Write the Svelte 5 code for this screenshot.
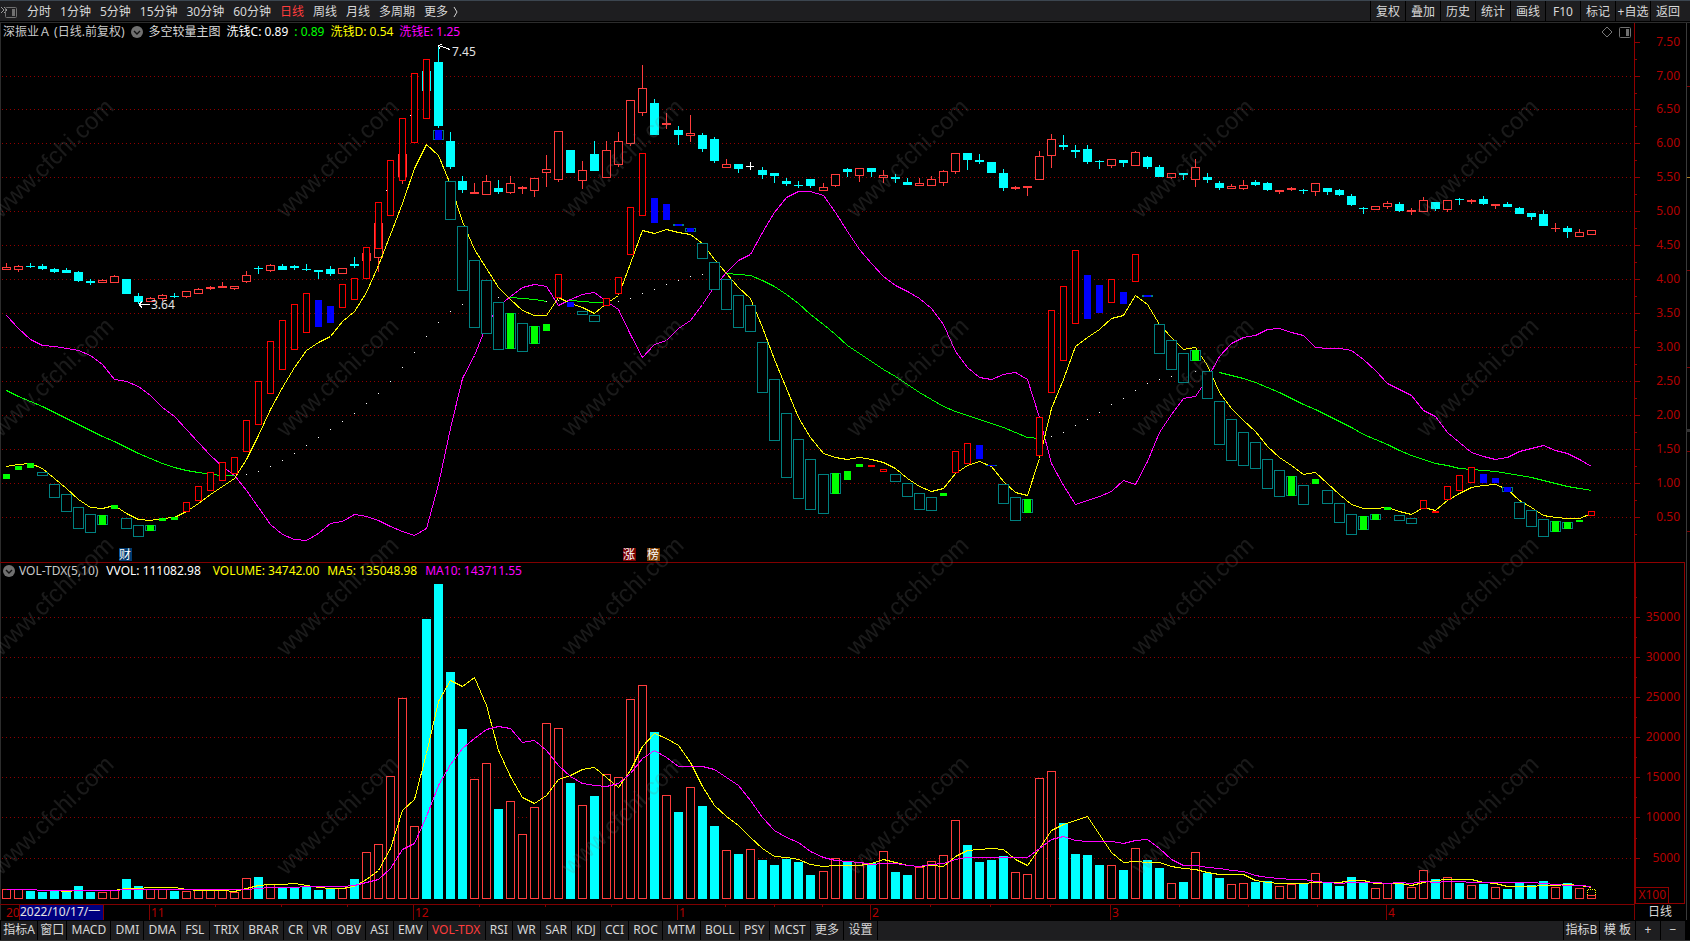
<script lang="ts">
	type Candle = [kind: string, high: number, top: number, bottom: number, low: number];
	type Bar = [kind: string, top: number, bottom: number];

	const periods = ['分时', '1分钟', '5分钟', '15分钟', '30分钟', '60分钟', '日线', '周线', '月线', '多周期', '更多'];
	const tools = ['复权', '叠加', '历史', '统计', '画线', 'F10', '标记', '+自选', '返回'];
	const indicators = [
		'指标A', '窗口', 'MACD', 'DMI', 'DMA', 'FSL', 'TRIX', 'BRAR', 'CR', 'VR', 'OBV', 'ASI', 'EMV', 'VOL-TDX',
		'RSI', 'WR', 'SAR', 'KDJ', 'CCI', 'ROC', 'MTM', 'BOLL', 'PSY', 'MCST', '更多', '设置'
	];
	const templates = ['指标B', '模 板', '+', '−'];

	let period = $state('日线');
	let indicator = $state('VOL-TDX');

	// Vertical positions are window rows; each panel shifts them up by its own top
	const PRICE_TOP = 23;
	const VOLUME_TOP = 562;
	const DATE_TOP = 904;
	const BASE = 899;

	// One bar every 12px, with a single column skipped after the 68th
	const col = (i: number) => 6 + 12 * i + (i >= 68 ? 1 : 0);

	const priceTicks = [
		['7.50', 42], ['7.00', 76], ['6.50', 109], ['6.00', 143], ['5.50', 177],
		['5.00', 211], ['4.50', 245], ['4.00', 279], ['3.50', 313], ['3.00', 347],
		['2.50', 381], ['2.00', 415], ['1.50', 449], ['1.00', 483], ['0.50', 517]
	] as [string, number][];

	const volumeTicks = [
		['35000', 617], ['30000', 657], ['25000', 697], ['20000', 737],
		['15000', 777], ['10000', 817], ['5000', 858]
	] as [string, number][];

	// r: rising (hollow), c: falling (solid), w: unchanged
	const candles: Candle[] = [
		['r', 263, 267, 270, 270], ['r', 265, 266, 270, 272], ['c', 263, 266, 267, 268], ['c', 264, 266, 269, 270],
		['c', 268, 269, 272, 273], ['c', 268, 270, 273, 273], ['c', 271, 272, 281, 282], ['c', 279, 281, 283, 285],
		['r', 279, 280, 283, 283], ['r', 275, 276, 283, 283], ['c', 279, 279, 294, 294], ['c', 293, 296, 302, 304],
		['r', 297, 298, 302, 302], ['r', 294, 295, 299, 301], ['c', 293, 296, 297, 298], ['r', 291, 291, 297, 298],
		['r', 288, 289, 294, 294], ['r', 286, 287, 289, 290], ['r', 282, 286, 288, 288], ['r', 286, 286, 289, 290],
		['r', 271, 275, 282, 283], ['c', 266, 268, 269, 274], ['r', 264, 265, 271, 272], ['c', 264, 266, 270, 270],
		['c', 265, 266, 268, 270], ['c', 264, 269, 270, 271], ['c', 270, 270, 272, 279], ['c', 266, 269, 274, 276],
		['r', 268, 268, 274, 274], ['c', 257, 264, 266, 268], ['r', 253, 253, 261, 261], ['r', 223, 223, 258, 272],
		['w', 190, 190, 191, 191], ['r', 154, 154, 177, 184], ['w', 115, 115, 116, 116], ['c', 71, 71, 91, 91],
		['c', 46, 62, 126, 128], ['c', 132, 141, 167, 169], ['c', 176, 181, 190, 193], ['r', 183, 192, 194, 194],
		['r', 175, 181, 195, 195], ['c', 180, 188, 192, 194], ['r', 176, 183, 193, 194], ['r', 186, 187, 189, 194],
		['r', 178, 178, 191, 197], ['r', 155, 169, 173, 187], ['r', 131, 131, 180, 182], ['c', 150, 150, 173, 173],
		['r', 161, 170, 181, 189], ['c', 141, 154, 171, 171], ['r', 141, 150, 178, 178], ['r', 132, 141, 165, 167],
		['r', 100, 100, 144, 146], ['r', 65, 88, 113, 116], ['c', 99, 103, 135, 135], ['r', 113, 123, 125, 129],
		['c', 126, 130, 135, 145], ['r', 115, 133, 136, 142], ['c', 133, 135, 149, 152], ['c', 137, 139, 161, 163],
		['r', 159, 164, 168, 168], ['c', 164, 164, 169, 173], ['w', 162, 166, 167, 170], ['c', 167, 170, 175, 179],
		['c', 173, 173, 176, 183], ['c', 178, 181, 184, 186], ['c', 181, 185, 186, 188], ['c', 179, 179, 186, 188],
		['r', 183, 187, 191, 191], ['r', 174, 174, 186, 187], ['c', 168, 169, 172, 177], ['r', 168, 168, 176, 182],
		['c', 168, 168, 172, 177], ['r', 170, 175, 178, 183], ['c', 174, 177, 179, 183], ['c', 178, 182, 185, 185],
		['r', 178, 183, 186, 186], ['r', 176, 179, 186, 186], ['r', 170, 171, 183, 186], ['r', 153, 153, 172, 174],
		['c', 153, 153, 160, 170], ['c', 154, 160, 162, 164], ['c', 162, 162, 173, 173], ['c', 169, 173, 188, 191],
		['r', 186, 187, 189, 190], ['r', 186, 186, 188, 196], ['r', 151, 156, 180, 180], ['r', 134, 139, 156, 168],
		['c', 135, 145, 147, 150], ['c', 145, 150, 152, 158], ['c', 145, 149, 162, 164], ['c', 160, 161, 162, 169],
		['r', 159, 159, 166, 168], ['c', 160, 160, 163, 167], ['r', 151, 152, 166, 166], ['c', 156, 157, 167, 169],
		['c', 165, 167, 177, 177], ['r', 173, 173, 178, 179], ['c', 173, 173, 175, 180], ['r', 159, 167, 180, 187],
		['c', 173, 177, 180, 183], ['c', 181, 183, 188, 190], ['r', 184, 186, 189, 189], ['r', 180, 185, 189, 190],
		['c', 180, 182, 185, 186], ['c', 182, 183, 190, 191], ['r', 190, 190, 192, 194], ['r', 187, 188, 190, 191],
		['c', 189, 190, 191, 194], ['r', 183, 183, 192, 196], ['c', 188, 188, 192, 195], ['c', 189, 190, 195, 196],
		['c', 194, 196, 205, 206], ['c', 207, 208, 209, 214], ['r', 206, 206, 210, 210], ['r', 201, 203, 207, 209],
		['c', 202, 204, 211, 212], ['r', 208, 210, 212, 215], ['r', 197, 200, 212, 212], ['c', 202, 202, 209, 211],
		['r', 200, 200, 210, 212], ['c', 198, 199, 200, 205], ['r', 199, 200, 202, 204], ['c', 196, 199, 204, 205],
		['r', 204, 204, 206, 209], ['c', 202, 204, 207, 207], ['c', 207, 208, 214, 214], ['c', 213, 213, 217, 220],
		['c', 210, 214, 226, 226], ['r', 223, 228, 229, 232], ['c', 226, 228, 232, 238], ['r', 229, 232, 237, 237],
		['r', 230, 230, 235, 235]
	];

	// t: teal frame, g: green, b: blue, R: red frame; tg and tb are a fill inside the teal frame
	const bars: Bar[] = [
		['g', 474, 479], ['g', 466, 470], ['g', 463, 468], ['t', 472, 476], ['t', 484, 498], ['t', 494, 512],
		['t', 507, 529], ['t', 514, 533], ['tg', 515, 525], ['g', 505, 509], ['t', 518, 529], ['t', 525, 537],
		['tg', 525, 531], ['g', 518, 521], ['g', 517, 520], ['R', 502, 512], ['R', 486, 501], ['R', 472, 491],
		['R', 462, 481], ['R', 457, 474], ['R', 420, 452], ['R', 381, 425], ['R', 341, 394], ['R', 320, 370],
		['R', 304, 350], ['R', 293, 333], ['b', 300, 327], ['b', 306, 323], ['R', 284, 308], ['R', 278, 300],
		['R', 247, 279], ['R', 202, 249], ['R', 160, 216], ['R', 118, 181], ['R', 73, 143], ['R', 59, 119],
		['tb', 130, 140], ['t', 181, 220], ['t', 226, 291], ['t', 260, 328], ['t', 280, 334], ['t', 302, 350],
		['tg', 313, 349], ['t', 323, 352], ['tg', 326, 344], ['g', 324, 331], ['R', 274, 298], ['b', 302, 307],
		['t', 311, 315], ['t', 315, 322], ['R', 298, 306], ['R', 277, 294], ['R', 207, 255], ['R', 153, 216],
		['b', 198, 223], ['b', 204, 220], ['tb', 224, 226], ['tb', 228, 232], ['t', 243, 259], ['t', 262, 290],
		['t', 279, 310], ['t', 295, 328], ['t', 305, 332], ['t', 342, 393], ['t', 379, 441], ['t', 413, 478],
		['t', 439, 499], ['t', 459, 510], ['t', 474, 514], ['tg', 473, 494], ['g', 471, 480], ['g', 464, 467],
		['R', 465, 467], ['R', 469, 472], ['t', 474, 482], ['t', 483, 497], ['t', 493, 510], ['t', 497, 511],
		['g', 493, 496], ['R', 451, 473], ['R', 443, 464], ['b', 445, 459], ['tb', 465, 466], ['t', 484, 504],
		['t', 497, 521], ['tg', 499, 513], ['R', 417, 456], ['R', 310, 393], ['R', 286, 361], ['R', 250, 324],
		['b', 275, 319], ['b', 285, 313], ['R', 279, 303], ['b', 292, 304], ['R', 254, 282], ['tb', 295, 297],
		['t', 324, 354], ['t', 340, 370], ['t', 353, 383], ['tg', 350, 361], ['t', 371, 399], ['t', 401, 445],
		['t', 419, 461], ['t', 432, 466], ['t', 442, 469], ['t', 459, 489], ['t', 470, 497], ['tg', 476, 496],
		['t', 485, 505], ['g', 479, 484], ['t', 490, 504], ['t', 503, 523], ['t', 514, 535], ['tg', 516, 530],
		['tg', 514, 520], ['g', 507, 510], ['t', 515, 521], ['t', 518, 524], ['R', 500, 509], ['R', 511, 513],
		['R', 486, 500], ['R', 475, 491], ['R', 467, 483], ['b', 474, 483], ['b', 478, 483], ['tb', 487, 492],
		['t', 502, 519], ['t', 510, 527], ['t', 519, 537], ['tg', 521, 532], ['tg', 522, 529], ['g', 520, 522],
		['R', 511, 516]
	];

	const lineD = [
		466, 464, 463, 468, 478, 488, 499, 507, 508, 505, 513, 519, 520, 518, 517, 511, 503, 494, 486, 478, 459, 435,
		409, 387, 367, 350, 342, 336, 321, 311, 292, 265, 234, 203, 168, 144, 155, 184, 221, 249, 268, 287, 299, 310,
		315, 315, 297, 303, 307, 313, 303, 295, 263, 230, 233, 229, 232, 234, 243, 259, 273, 287, 298, 327, 359, 388,
		417, 437, 453, 457, 459, 457, 459, 462, 468, 478, 486, 491, 488, 473, 465, 461, 466, 481, 492, 495, 458, 408,
		379, 346, 337, 329, 318, 315, 295, 304, 324, 337, 349, 347, 365, 392, 408, 420, 431, 446, 457, 465, 474, 472,
		483, 494, 504, 508, 508, 507, 511, 514, 507, 510, 500, 493, 487, 485, 484, 489, 500, 507, 515, 517, 518, 518,
		513
	];

	const lineE = [
		315, 328, 339, 345, 346, 348, 350, 355, 364, 379, 381, 386, 395, 407, 416, 429, 442, 455, 466, 475, 490, 507,
		524, 534, 539, 540, 533, 523, 521, 514, 516, 520, 526, 531, 535, 528, 484, 428, 378, 355, 325, 306, 296, 287,
		284, 286, 305, 299, 294, 292, 301, 309, 334, 357, 344, 340, 328, 320, 304, 286, 272, 260, 254, 232, 212, 197,
		191, 191, 195, 212, 231, 249, 263, 276, 285, 291, 298, 308, 324, 351, 367, 377, 379, 374, 372, 379, 417, 463,
		485, 504, 500, 496, 491, 480, 484, 461, 432, 414, 398, 396, 378, 356, 343, 337, 335, 329, 328, 332, 335, 347,
		348, 348, 350, 359, 370, 383, 389, 395, 410, 416, 432, 442, 452, 456, 459, 457, 451, 448, 445, 450, 453, 459,
		466
	];

	// The green line breaks wherever the dotted one takes over
	const greenRuns: [number, number[]][] = [
		[0, [390, 396, 401, 406, 412, 418, 424, 430, 436, 441, 447, 453, 458, 463, 467, 470, 472, 474, 475, 475]],
		[42, [297, 298, 299, 301]],
		[47, [300, 301, 302, 302]],
		[60, [
			273, 274, 275, 280, 286, 294, 303, 314, 324, 334, 345, 353, 361, 369, 376, 384, 392, 399, 406, 411, 415,
			419, 423, 427, 432, 437, 438
		]],
		[101, [
			372, 375, 378, 382, 387, 392, 398, 404, 409, 415, 421, 427, 434, 439, 444, 450, 455, 459, 463, 465, 468,
			469, 470, 471, 473, 475, 477, 480, 483, 486, 488, 490
		]]
	];

	const dotRuns: [number, number[]][] = [
		[20, [474, 471, 466, 460, 453, 445, 437, 429, 421, 413, 403, 393, 381, 367, 352, 336, 322, 311, 304]],
		[41, [297]],
		[45, [301, 300]],
		[51, [301, 298, 293, 289, 284, 280, 276, 274]],
		[87, [436, 432, 425, 419, 412, 404, 398, 390, 383, 379, 376]],
		[99, [371]]
	];

	const volumeKinds =
		'rrccccccrrccrrcrrrrrrcrccccc' + 'rcrrrrrccccrrcrrrrrcrcrrrrcrcrccrcrcccccrrcrcrccrrrrccccrrrrccccrcrccrcrccrrccrrcrccccrrcrrcrcrcrcccc' + 'rcrr';

	const volumeTops = [
		889, 889, 891, 892, 891, 891, 886, 892, 892, 890, 879, 886, 889, 889, 891, 891, 890, 890, 890, 892, 878, 877,
		884, 888, 888, 886, 890, 888, 888, 879, 852, 844, 776, 698, 826, 619, 584, 672, 729, 779, 763, 809, 801, 834,
		807, 723, 728, 783, 805, 796, 774, 777, 699, 685, 732, 795, 812, 787, 806, 826, 850, 854, 849, 860, 865, 859,
		862, 875, 871, 858, 861, 862, 863, 851, 872, 875, 867, 861, 855, 820, 845, 862, 860, 856, 872, 874, 778, 771,
		823, 854, 855, 865, 865, 870, 848, 860, 868, 883, 882, 852, 873, 878, 884, 883, 882, 881, 886, 884, 884, 873,
		882, 886, 877, 883, 888, 883, 883, 887, 870, 879, 877, 883, 885, 884, 887, 889, 883, 885, 881, 887, 883, 888,
		895
	];

	function average(span: number) {
		return volumeTops.map((_, i) => {
			let sum = 0;
			for (let k = i - span + 1; k <= i; k++) sum += k < 0 ? 889 : volumeTops[k];
			return Math.round(sum / span);
		});
	}

	const ma5 = average(5);
	const ma10 = average(10);

	const points = (ys: number[], start = 0) => ys.map((y, k) => `${col(start + k) + 0.5},${y + 0.5}`).join(' ');

	const majorDates = [[149, '11'], [413, '12'], [677, '1'], [870, '2'], [1110, '3'], [1386, '4']] as [number, string][];
	const minorDates = [215, 281, 347, 479, 545, 611, 725, 774, 822, 930, 990, 1050, 1179, 1248, 1317];

	const edgeMarks = [[86, 1], [270, 1], [367, 1], [429, 1], [451, 1], [531, 1]];
</script>

{#snippet chevron()}
	<svg width="12" height="12" aria-hidden="true">
		<circle cx="6" cy="6" r="6" fill="#707070" />
		<path d="M3 5 L6 8 L9 5" fill="none" stroke="#111" stroke-width="1.4" />
	</svg>
{/snippet}

<div class="terminal">
	<header class="toolbar">
		<button class="dock" aria-label="侧栏">
			<svg width="18" height="13" aria-hidden="true">
				<path d="M1 1 L4 4 L1 7 M4 1 L7 4 L4 7" fill="none" stroke="#999" />
				<rect x="5.5" y="1.5" width="11" height="10" rx="1" fill="none" stroke="#707070" />
				<rect x="12" y="3" width="3" height="7" fill="#707070" />
			</svg>
		</button>
		<nav class="periods">
			{#each periods as name}
				<button class:active={period === name} onclick={() => (period = name)}>{name}</button>
			{/each}
			<svg class="more" width="6" height="12" aria-hidden="true">
				<path d="M1 1 L4 6 L1 11" fill="none" stroke="#d0d0d0" />
			</svg>
		</nav>
		<div class="tools">
			{#each tools as name}
				<button>{name}</button>
			{/each}
		</div>
	</header>

	<div class="body">
		<main>
			<section class="panel price">
				<div class="legend">
					<span class="stock">深振业Ａ (日线.前复权)</span>
					<button class="fold" aria-label="主图指标">{@render chevron()}</button>
					<span>多空较量主图</span>
					<span class="white">洗钱C: 0.89</span>
					<span class="green">: 0.89</span>
					<span class="yellow">洗钱D: 0.54</span>
					<span class="magenta">洗钱E: 1.25</span>
				</div>
				<div class="corner">
					<svg width="31" height="13" aria-hidden="true">
						<path d="M6 1 L11 6 L6 11 L1 6 Z" fill="none" stroke="#777" />
						<rect x="18.5" y="1.5" width="11" height="10" rx="1" fill="none" stroke="#707070" />
						<rect x="25" y="3" width="3" height="7" fill="#707070" />
					</svg>
				</div>
				<svg class="plot" width="100%" height="539" shape-rendering="crispEdges">
					<g transform="translate(0 {-PRICE_TOP})">
						{#each priceTicks.slice(1) as [, y]}
							<line class="grid" x1="2" x2="100%" y1={y + 0.5} y2={y + 0.5} />
						{/each}
						{#each candles as [kind, high, top, bottom, low], i}
							<g class="candle {kind}">
								<rect x={col(i)} y={high} width="1" height={low - high} />
								<rect x={col(i) - 4} y={top} width={kind === 'w' ? 8 : 9} height={bottom - top} />
								{#if kind === 'r' && bottom - top > 2}
									<rect class="hollow" x={col(i) - 3} y={top + 1} width="7" height={bottom - top - 2} />
								{/if}
							</g>
						{/each}
						{#each greenRuns as [start, ys]}
							<polyline class="line green" points={points(ys, start)} />
						{/each}
						<polyline class="line magenta" points={points(lineE)} />
						<polyline class="line yellow" points={points(lineD)} />
						{#each bars as [kind, top, bottom], i}
							{#if kind[0] === 't'}
								<rect class="teal" x={col(i) - 5} y={top} width="11" height={bottom - top} />
								{#if bottom - top > 2}
									<rect class="hollow" x={col(i) - 4} y={top + 1} width="9" height={bottom - top - 2} />
								{/if}
							{/if}
							{#if kind.endsWith('g') || kind.endsWith('b')}
								<rect class={kind.slice(-1)} x={col(i) - 3} y={top} width="7" height={bottom - top} />
							{:else if kind === 'R'}
								<rect class="red" x={col(i) - 3} y={top} width="7" height={bottom - top} />
								{#if bottom - top > 2}
									<rect class="hollow" x={col(i) - 2} y={top + 1} width="5" height={bottom - top - 2} />
								{/if}
							{/if}
						{/each}
						{#each dotRuns as [start, ys]}
							{#each ys as y, k}
								<rect fill="#fff" x={col(start + k)} {y} width="1" height="1" />
							{/each}
						{/each}
						<path class="arrow" d="M139 304.5 H150 M139 304.5 L142 301.5 M139 304.5 L142 307.5" />
						<text class="note" x="151" y="309">3.64</text>
						<path class="arrow" d="M438.5 45.5 L450 49.5 M438.5 45.5 L442 44.5 M438.5 45.5 L440 49" />
						<text class="note" x="452" y="56">7.45</text>
						<g class="events">
							<rect x="119" y="548" width="13" height="13" fill="#003a70" />
							<text x="119" y="559">财</text>
							<rect x="623" y="548" width="13" height="13" fill="#780000" />
							<text x="623" y="559">涨</text>
							<rect x="647" y="548" width="13" height="13" fill="#7c3c00" />
							<text x="647" y="559">榜</text>
						</g>
					</g>
				</svg>
				<svg class="axis" width="51" height="539" shape-rendering="crispEdges">
					<g transform="translate(0 {-PRICE_TOP})">
						<rect x="0" y="23" width="1" height="539" />
						{#each priceTicks as [label, y]}
							<rect x="0" {y} width="6" height="1" />
							<rect x="0" y={y + 17} width="3" height="1" />
							<text x="46" y={y + 4}>{label}</text>
						{/each}
					</g>
				</svg>
			</section>

			<section class="panel volume">
				<div class="legend">
					<button class="fold" aria-label="副图指标">{@render chevron()}</button>
					<span class="stock">VOL-TDX(5,10)</span>
					<span class="white wide">VVOL: 111082.98</span>
					<span class="yellow">VOLUME: 34742.00</span>
					<span class="yellow">MA5: 135048.98</span>
					<span class="magenta">MA10: 143711.55</span>
				</div>
				<svg class="plot" width="100%" height="342" shape-rendering="crispEdges">
					<g transform="translate(0 {-VOLUME_TOP})">
						<rect class="rule" x="0" y="562" width="100%" height="1" />
						{#each volumeTicks as [, y]}
							<line class="grid" x1="2" x2="100%" y1={y + 0.5} y2={y + 0.5} />
						{/each}
						{#each volumeTops as top, i}
							<g class="candle {volumeKinds[i]}">
								<rect x={col(i) - 4} y={top} width="9" height={BASE - top} />
								{#if volumeKinds[i] === 'r'}
									<rect class="hollow" x={col(i) - 3} y={top + 1} width="7" height={BASE - top - 2} />
								{/if}
							</g>
						{/each}
						<path class="forecast" d="M1587.5 895 V889.5 H1595.5 V895" />
						<polyline class="line yellow" points={points(ma5)} />
						<polyline class="line magenta" points={points(ma10)} />
					</g>
				</svg>
				<svg class="axis" width="51" height="342" shape-rendering="crispEdges">
					<g transform="translate(0 {-VOLUME_TOP})">
						<rect x="0" y="562" width="51" height="1" />
						<rect x="0" y="562" width="2" height="342" />
						<rect x="50" y="562" width="1" height="342" />
						<rect x="0" y="903" width="51" height="1" />
						{#each volumeTicks as [label, y]}
							<rect x="0" {y} width="6" height="1" />
							<rect x="0" y={y - 20} width="3" height="1" />
							<text x="46" y={y + 4}>{label}</text>
						{/each}
						<rect x="0" y="887" width="34" height="1" />
						<rect x="34" y="887" width="1" height="17" />
						<text x="32" y="899">X100</text>
					</g>
				</svg>
			</section>

			<section class="panel dates">
				<svg class="plot" width="100%" height="16" shape-rendering="crispEdges">
					<g transform="translate(0 {-DATE_TOP})">
						<rect class="rule" x="0" y="904" width="100%" height="1" />
						<text class="month" x="6" y="917">20</text>
						<rect x="19" y="905" width="85" height="15" fill="#800000" />
						<rect x="20" y="905" width="83" height="15" fill="#000080" />
						<text class="note" x="20" y="916">2022/10/17/一</text>
						{#each minorDates as x}
							<rect class="rule" {x} y="904" width="1" height="3" />
						{/each}
						{#each majorDates as [x, label]}
							<rect class="rule" {x} y="904" width="1" height="16" />
							<text class="month" x={x + 2} y="917">{label}</text>
						{/each}
					</g>
				</svg>
				<div class="cycle">日线</div>
			</section>
		</main>

		<aside class="edge">
			<svg width="5" height="100%" shape-rendering="crispEdges" aria-hidden="true">
				<rect x="1" width="1" height="100%" fill="#3a3a3a" />
				{#each edgeMarks as [y, h]}
					<rect x="2" y={y - PRICE_TOP} width="3" height={h} fill="#800000" />
				{/each}
				<rect x="2" y="154" width="3" height="1" fill="#b08020" />
				<rect x="1" y="406" width="4" height="3" fill="#333" />
			</svg>
		</aside>

		<svg class="watermark" width="100%" height="100%" aria-hidden="true">
			<defs>
				<pattern
					id="mark"
					width="285"
					height="219"
					patternUnits="userSpaceOnUse"
					patternTransform="translate(-20 -12)"
				>
					<text transform="translate(21 208) rotate(-44)">www.cfchi.com</text>
				</pattern>
			</defs>
			<rect width="100%" height="100%" fill="url(#mark)" />
		</svg>
	</div>

	<footer class="tabs">
		<nav class="indicators">
			{#each indicators as name, i}
				<button class:tight={i < 2} class:active={indicator === name} onclick={() => (indicator = name)}>
					{name}
				</button>
			{/each}
		</nav>
		<span class="spacer"></span>
		<div class="templates">
			{#each templates as name}
				<button>{name}</button>
			{/each}
		</div>
	</footer>
</div>

<style>
	:global(body) {
		background: #000;
	}

	.terminal {
		display: flex;
		flex-direction: column;
		min-height: 100vh;
		background: #000;
		color: #d8d8d8;
		font-family: 'Noto Sans', 'Noto Sans CJK SC', sans-serif;
		font-size: 12px;
		line-height: 16px;
		overflow: hidden;
	}

	button {
		border: 0;
		padding: 0;
		background: none;
		color: inherit;
		font: inherit;
		white-space: nowrap;
		cursor: pointer;
	}

	.active {
		color: #ff3c3c;
	}

	.toolbar {
		display: flex;
		align-items: stretch;
		height: 20px;
		margin-bottom: 1px;
		border-top: 1px solid #3c4650;
		padding-right: 5px;
		background: #1e1e20;
	}

	.dock {
		display: flex;
		align-items: center;
		width: 27px;
		padding-top: 2px;
	}

	.periods {
		display: flex;
		align-items: center;
		gap: 9px;
		flex: 1;
		padding-top: 2px;
	}

	.more {
		margin-left: -4px;
	}

	.tools {
		display: grid;
		grid-template-columns: repeat(9, 35px);
	}

	.tools button {
		border-left: 1px solid #000;
		padding-top: 2px;
		overflow: hidden;
	}

	.body {
		position: relative;
		display: flex;
		border-top: 1px solid #2c2c2c;
	}

	main {
		flex: 1;
		min-width: 0;
		box-shadow: inset 1px 0 #2c2c2c;
	}

	.panel {
		position: relative;
		display: grid;
		grid-template-columns: minmax(0, 1fr) 51px;
	}

	.panel svg {
		display: block;
	}

	.legend {
		position: absolute;
		top: 1px;
		left: 3px;
		display: flex;
		align-items: center;
		gap: 6px;
		white-space: nowrap;
	}

	.volume .legend {
		gap: 8px;
	}

	.fold {
		display: flex;
	}

	.volume .fold {
		margin-right: -4px;
	}

	.stock {
		color: #c8c8c8;
	}

	.wide {
		margin-right: 4px;
	}

	.white {
		color: #fff;
	}

	.legend .green {
		color: #0f0;
	}

	.legend .yellow {
		color: #ff0;
	}

	.legend .magenta {
		color: #f0f;
	}

	.corner {
		position: absolute;
		top: 3px;
		right: 53px;
	}

	.grid {
		stroke: #900000;
		stroke-dasharray: 1 3;
	}

	.rule {
		fill: #800000;
	}

	.axis {
		fill: #900000;
	}

	.axis text {
		fill: #b40000;
		text-anchor: end;
	}

	.month {
		fill: #b40000;
	}

	.candle.r {
		fill: #ff3c3c;
	}

	.candle.c {
		fill: #0ff;
	}

	.candle.w {
		fill: #fff;
	}

	.hollow {
		fill: #000;
	}

	.teal {
		fill: #008080;
	}

	.red {
		fill: #f00;
	}

	.g {
		fill: #0f0;
	}

	.b {
		fill: #00f;
	}

	.line {
		fill: none;
		stroke-width: 1;
	}

	.line.green {
		stroke: #0f0;
	}

	.line.magenta {
		stroke: #f0f;
	}

	.line.yellow {
		stroke: #ff0;
	}

	.forecast {
		fill: none;
		stroke: #ff0;
		stroke-dasharray: 1 1;
	}

	.arrow {
		fill: none;
		stroke: #fff;
	}

	.note {
		fill: #e4e4e4;
	}

	.events text {
		fill: #fff;
	}

	.cycle {
		border-left: 1px solid #800000;
		text-align: center;
	}

	.edge {
		width: 5px;
	}

	.edge svg {
		display: block;
	}

	.watermark {
		position: absolute;
		inset: 0;
		pointer-events: none;
	}

	.watermark text {
		fill: rgba(120, 120, 120, 0.22);
		font-family: 'Liberation Sans', Arial, sans-serif;
		font-size: 24px;
	}

	.tabs {
		display: flex;
		gap: 1px;
		height: 19px;
		margin-top: 1px;
		border-bottom: 1px solid #2c2c2c;
		padding: 0 5px 0 1px;
		background: #000;
	}

	.indicators {
		display: flex;
		flex: 0 0 52%;
		gap: 1px;
	}

	.tabs button,
	.spacer {
		background: #1e1e20;
	}

	.tabs button {
		padding-bottom: 2px;
	}

	.indicators button {
		flex: 1 0 auto;
		padding: 0 4px 2px;
	}

	.indicators .tight {
		padding: 0 2px 2px;
	}

	.spacer {
		flex: 1;
	}

	.templates {
		display: grid;
		grid-template-columns: 35px 35px 24px 24px;
		gap: 1px;
	}
</style>
